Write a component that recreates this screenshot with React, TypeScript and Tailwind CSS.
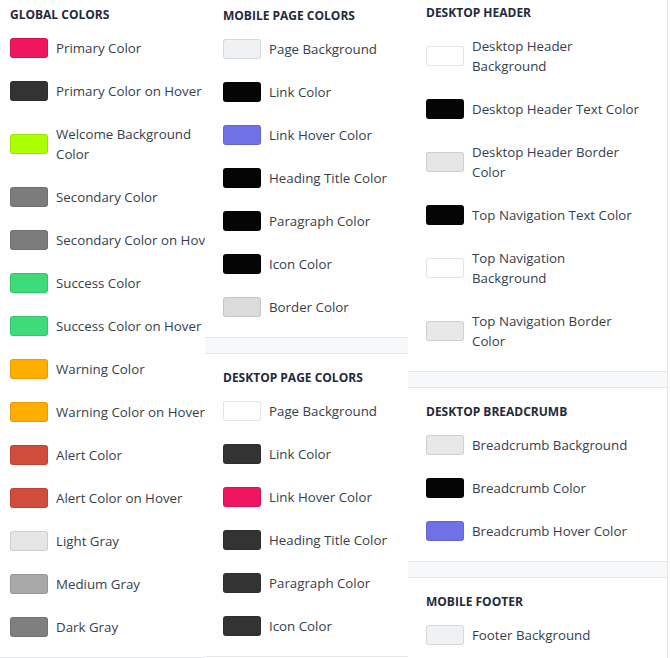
import React from "react";

type Swatch = { label: string; color: string };
type Section = { title: string; items: Swatch[] };

const globalColors: Section = {
  title: "Global Colors",
  items: [
    { label: "Primary Color", color: "#ef1561" },
    { label: "Primary Color on Hover", color: "#333333" },
    { label: "Welcome Background\nColor", color: "#aaff00" },
    { label: "Secondary Color", color: "#7c7c7c" },
    { label: "Secondary Color on Hover", color: "#7c7c7c" },
    { label: "Success Color", color: "#3ddb79" },
    { label: "Success Color on Hover", color: "#3ddb79" },
    { label: "Warning Color", color: "#ffae00" },
    { label: "Warning Color on Hover", color: "#ffae00" },
    { label: "Alert Color", color: "#d14c3b" },
    { label: "Alert Color on Hover", color: "#d14c3b" },
    { label: "Light Gray", color: "#e6e6e6" },
    { label: "Medium Gray", color: "#a8a8a8" },
    { label: "Dark Gray", color: "#7f7f7f" },
  ],
};

const mobilePage: Section = {
  title: "Mobile Page Colors",
  items: [
    { label: "Page Background", color: "#f0f1f3" },
    { label: "Link Color", color: "#050505" },
    { label: "Link Hover Color", color: "#6f72e6" },
    { label: "Heading Title Color", color: "#050505" },
    { label: "Paragraph Color", color: "#050505" },
    { label: "Icon Color", color: "#050505" },
    { label: "Border Color", color: "#dcdcdc" },
  ],
};

const desktopPage: Section = {
  title: "Desktop Page Colors",
  items: [
    { label: "Page Background", color: "#ffffff" },
    { label: "Link Color", color: "#333333" },
    { label: "Link Hover Color", color: "#ef1561" },
    { label: "Heading Title Color", color: "#333333" },
    { label: "Paragraph Color", color: "#333333" },
    { label: "Icon Color", color: "#333333" },
  ],
};

const desktopHeader: Section = {
  title: "Desktop Header",
  items: [
    { label: "Desktop Header\nBackground", color: "#ffffff" },
    { label: "Desktop Header Text Color", color: "#050505" },
    { label: "Desktop Header Border\nColor", color: "#e6e6e6" },
    { label: "Top Navigation Text Color", color: "#050505" },
    { label: "Top Navigation\nBackground", color: "#ffffff" },
    { label: "Top Navigation Border\nColor", color: "#e8e8e8" },
  ],
};

const breadcrumb: Section = {
  title: "Desktop Breadcrumb",
  items: [
    { label: "Breadcrumb Background", color: "#e8e8e8" },
    { label: "Breadcrumb Color", color: "#050505" },
    { label: "Breadcrumb Hover Color", color: "#6f72e6" },
  ],
};

const mobileFooter: Section = {
  title: "Mobile Footer",
  items: [{ label: "Footer Background", color: "#f0f1f3" }],
};

function ColorCard({ section, padLeft }: { section: Section; padLeft: string }) {
  return (
    <div className={`bg-white border-y border-[#e4e6ea] pt-[14px] pb-[20px] ${padLeft}`}>
      <h3 className="text-[12px] leading-[20px] font-bold uppercase text-[#1f2a3a] mb-[13px] whitespace-nowrap">
        {section.title}
      </h3>
      <div className="flex flex-col gap-[23px]">
        {section.items.map((item) => (
          <div key={item.label} className="flex items-center gap-2">
            <div
              className="w-[38px] h-[20px] flex-shrink-0 rounded-[3px] border border-black/10"
              style={{ backgroundColor: item.color }}
            />
            <span className="text-[13.3px] leading-[20px] text-[#363e4c] whitespace-pre">
              {item.label}
            </span>
          </div>
        ))}
      </div>
    </div>
  );
}

export default function App() {
  return (
    <div
      className="w-[670px] h-[658px] overflow-hidden bg-white flex items-start"
      style={{ fontFamily: '"Open Sans", "Noto Sans", Arial, sans-serif' }}
    >
      {/* Column 1 */}
      <div className="w-[205px] flex-shrink-0 -mt-[10px] overflow-hidden">
        <ColorCard section={globalColors} padLeft="pl-[10px]" />
      </div>

      {/* Column 2 */}
      <div className="w-[203px] flex-shrink-0 -mt-[9px] flex flex-col gap-[15px] bg-[#f7f8fa]">
        <ColorCard section={mobilePage} padLeft="pl-[18px]" />
        <ColorCard section={desktopPage} padLeft="pl-[18px]" />
      </div>

      {/* Column 3 */}
      <div className="w-[260px] flex-shrink-0 -mt-[12px] flex flex-col gap-[15px] bg-[#f7f8fa] border-r border-[#e4e6ea]">
        <ColorCard section={desktopHeader} padLeft="pl-[18px]" />
        <ColorCard section={breadcrumb} padLeft="pl-[18px]" />
        <ColorCard section={mobileFooter} padLeft="pl-[18px]" />
      </div>
    </div>
  );
}
